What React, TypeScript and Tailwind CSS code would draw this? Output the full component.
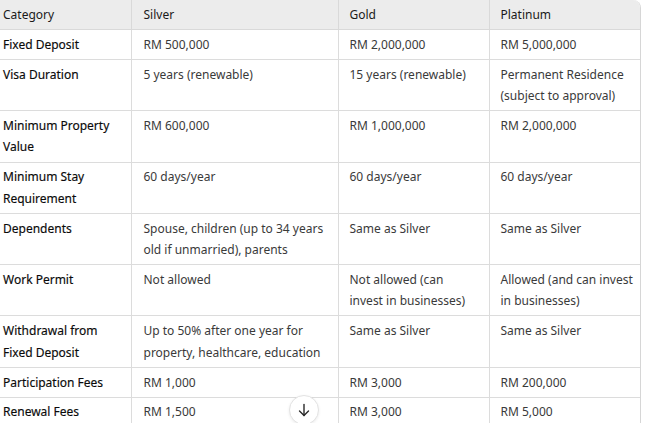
import React from "react";

const rows: string[][] = [
  ["Fixed Deposit", "RM 500,000", "RM 2,000,000", "RM 5,000,000"],
  ["Visa Duration", "5 years (renewable)", "15 years (renewable)", "Permanent Residence (subject to approval)"],
  ["Minimum Property Value", "RM 600,000", "RM 1,000,000", "RM 2,000,000"],
  ["Minimum Stay Requirement", "60 days/year", "60 days/year", "60 days/year"],
  ["Dependents", "Spouse, children (up to 34 years old if unmarried), parents", "Same as Silver", "Same as Silver"],
  ["Work Permit", "Not allowed", "Not allowed (can invest in businesses)", "Allowed (and can invest in businesses)"],
  ["Withdrawal from Fixed Deposit", "Up to 50% after one year for property, healthcare, education", "Same as Silver", "Same as Silver"],
  ["Participation Fees", "RM 1,000", "RM 3,000", "RM 200,000"],
  ["Renewal Fees", "RM 1,500", "RM 3,000", "RM 5,000"],
];

const cellPad = ["pl-[3px] pr-[2px]", "pl-[12px] pr-[2px]", "pl-[11px] pr-[13px]", "pl-[11px] pr-[1px]"];

export default function App() {
  return (
    <div
      className="relative w-[645px] h-[423px] overflow-hidden bg-white"
      style={{ fontFamily: '"Noto Sans", "Open Sans", sans-serif' }}
    >
      <div className="w-[641px] rounded-tr-[8px] border-r border-[#d6d6d6] overflow-hidden">
        <table className="w-[640px] border-collapse table-fixed text-[12px] leading-[21.3px] text-[#3a3a3a]">
          <colgroup>
            <col className="w-[131px]" />
            <col className="w-[207px]" />
            <col className="w-[151px]" />
            <col className="w-[151px]" />
          </colgroup>
          <thead>
            <tr className="bg-[#ececec]">
              {["Category", "Silver", "Gold", "Platinum"].map((h, i) => (
                <th
                  key={h}
                  className={`text-left font-normal text-[#1a1a1a] py-[3.85px] border-b border-[#d9d9d9] align-top ${cellPad[i]} ${
                    i === 0 ? "" : "border-l border-[#d9d9d9]"
                  }`}
                >
                  {h}
                </th>
              ))}
            </tr>
          </thead>
          <tbody>
            {rows.map((r) => (
              <tr key={r[0]}>
                {r.map((c, i) => (
                  <td
                    key={i}
                    className={`py-[3.85px] border-b border-[#dcdcdc] align-top ${cellPad[i]} ${
                      i === 0 ? "text-[#0a0a0a] [-webkit-text-stroke:0.15px_#0a0a0a]" : "border-l border-[#dcdcdc]"
                    }`}
                  >
                    {c}
                  </td>
                ))}
              </tr>
            ))}
          </tbody>
        </table>
      </div>
      <div className="absolute left-[289px] top-[395px] w-[30px] h-[30px] rounded-full bg-white border border-[#e3e3e3] shadow-[0_1px_3px_rgba(0,0,0,0.08)] flex items-center justify-center">
        <svg width="12" height="14" viewBox="0 0 12 14" fill="none" stroke="#2a2a2a" strokeWidth="1.4" strokeLinecap="round" strokeLinejoin="round">
          <path d="M6 1.5v11" />
          <path d="M1.5 8l4.5 4.5L10.5 8" />
        </svg>
      </div>
    </div>
  );
}
